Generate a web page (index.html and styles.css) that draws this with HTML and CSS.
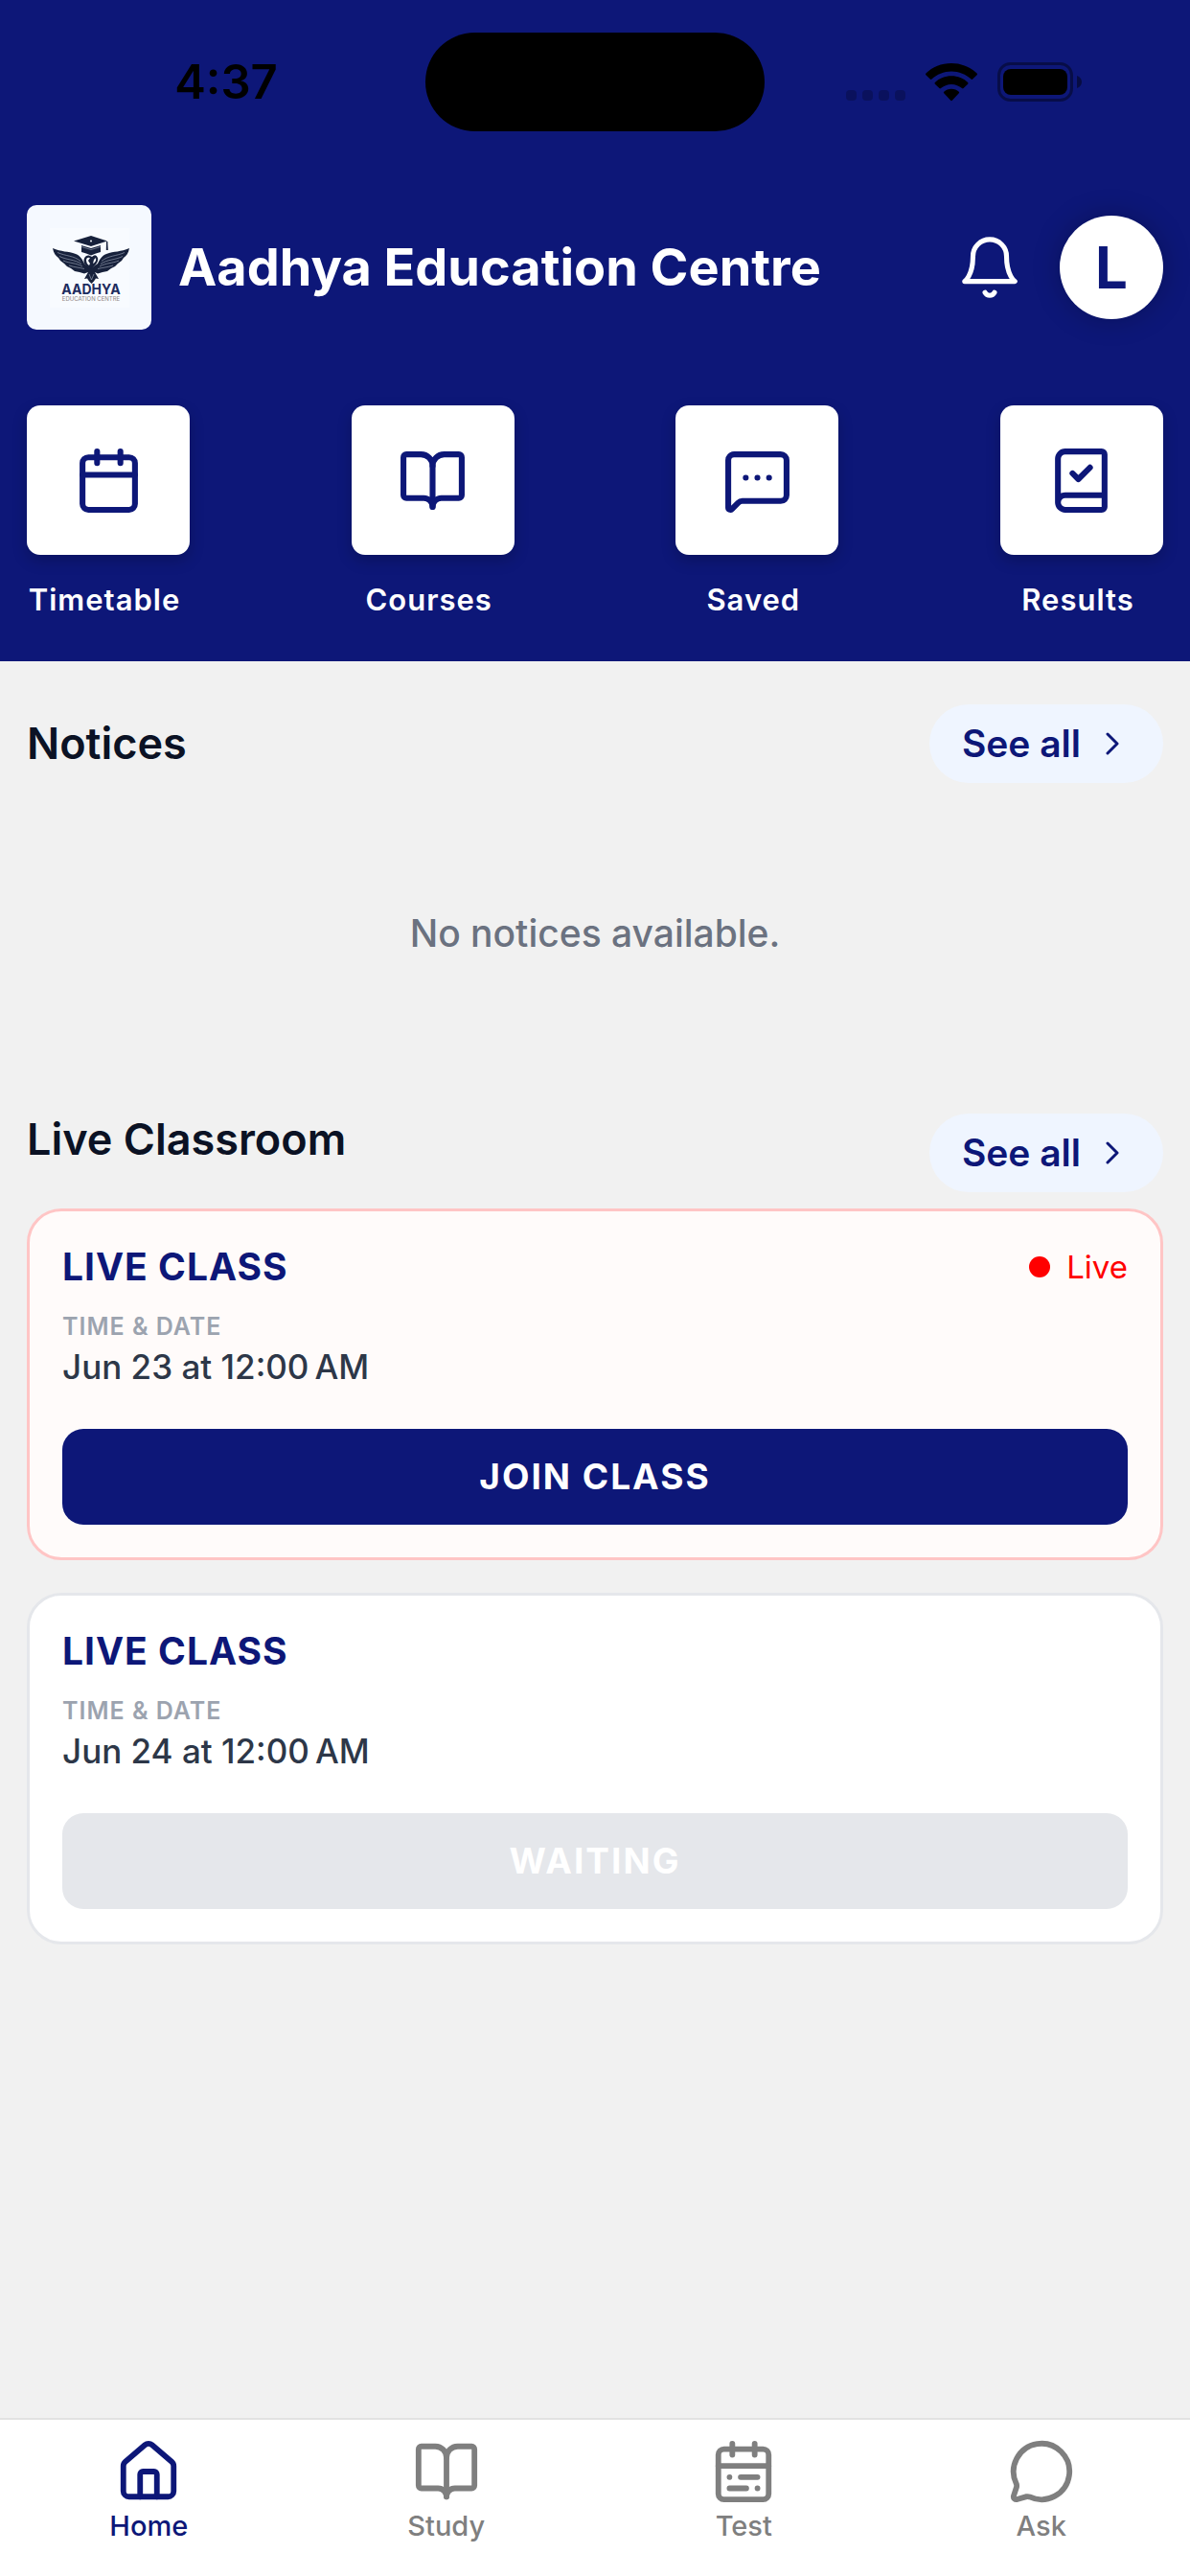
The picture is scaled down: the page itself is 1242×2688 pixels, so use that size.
FILE: index.html
```html
<!DOCTYPE html>
<html lang="en">
<head>
<meta charset="utf-8">
<meta name="viewport" content="width=device-width, initial-scale=1">
<title>Aadhya Education Centre</title>
<link rel="stylesheet" href="styles.css">
</head>
<body>
<header class="header">
  <div class="status">
    <div class="status-time">4:37</div>
    <div class="island"></div>
    <div class="status-icons">
      <svg class="signal" viewBox="0 0 62 41" aria-hidden="true"><g fill="#000" opacity=".22"><rect y="29" width="11" height="11" rx="4"/><rect x="17" y="29" width="11" height="11" rx="4"/><rect x="34" y="29" width="11" height="11" rx="4"/><rect x="51" y="29" width="11" height="11" rx="4"/></g></svg>
      <svg class="wifi" viewBox="0 0 54 41" aria-hidden="true"><path d="M27 1C16.600 1 7.200 5 .4 11.500q-.7.900 0 1.700l4.400 4.400q.8.700 1.700 0C11.900 12.600 19.100 9.500 27 9.500s15.100 3.100 20.500 8.100q.9.700 1.700 0l4.400-4.400q.7-.8 0-1.700C46.800 5 37.400 1 27 1zM27 14.300c-6.600 0-12.600 2.500-17.100 6.600q-.8.900 0 1.800l4.500 4.400q.8.700 1.600 0c2.900-2.600 6.800-4.200 11-4.200s8.100 1.600 11 4.200q.8.700 1.600 0l4.500-4.400q.8-.9 0-1.800c-4.500-4.100-10.500-6.600-17.100-6.600zM27 27.800c-3 0-5.700 1.100-7.800 2.900q-.7.800 0 1.600l7 7.500q.8.700 1.600 0l7-7.500q.7-.8 0-1.600c-2.100-1.800-4.800-2.900-7.800-2.900z"/></svg>
      <svg class="battery" viewBox="0 0 88 41" aria-hidden="true"><rect x="1.500" y="1.500" width="76" height="38" rx="12" fill="none" stroke="#000" stroke-width="3" opacity=".4"/><rect x="6" y="7" width="67" height="27" rx="8"/><path d="M83 14c3 .8 5 3.400 5 6.500s-2 5.700-5 6.500z" opacity=".45"/></svg>
    </div>
  </div>

  <div class="brand">
    <svg class="logo" viewBox="0 0 130 130" role="img" aria-label="Aadhya Education Centre logo">
      <rect width="130" height="130" fill="#f5f9ff"/>
      <rect x="24" y="24" width="83" height="83" fill="#f8fbff"/>
      <g fill="#17213b">
        <path d="M67 32 49 37.500 67 43 84 37.500z"/>
        <path d="M57 42l10 3L77 42v7q-5 1-10 3.500-5-2.500-10-3.500z"/>
        <path d="M83 38h1.300l.5 9h-2z"/>
        <path d="M27 45C36 49 43 48 51 51C56 53 58 57 60 61L67 66L74 61C76 57 78 53 83 51C91 48 98 49 107 45C106 50 104 53 101 55L99 58L95 61L92 64L88 66L84 69L79 70L74 71.500L71 70L75 77L72 76.500L70 79.500L67.500 82L65 79.500L63 76.500L60 77L64 70L60 71.500L55 70L50 69L46 66L42 64L39 61L35 58L33 55C30 53 28 50 27 45z"/>
        <path d="M60 61C58 54 63 50 68 54Q72 50 74 55Q75 58 72 62L67 67z"/>
      </g>
      <path d="M62 58q0-4 4-3l-2 3 2 3-1 2q-3-2-3-5zM72 55q1 4-3 6l1-4z" fill="#f8fbff"/>
      <path d="M32 49.500c9 4 17 3 24 9M34 53.500c8 4 16 3 23 8M38 58c7 3 13 2 20 6M44 63c6 2 10 2 16 3.500M102 49.500c-9 4-17 3-24 9M100 53.500c-8 4-16 3-23 8M96 58c-7 3-13 2-20 6M90 63c-6 2-10 2-16 3.500M57 43.500l10 3 10-3M65 72l2.500 6 2.500-6" fill="none" stroke="#a4adbd" stroke-width=".6"/>
      <circle cx="67" cy="37.500" r="1" fill="#f8fbff"/>
      <text class="logo-name" x="67" y="93" text-anchor="middle">AADHYA</text>
      <text class="logo-sub" x="67" y="100" text-anchor="middle">EDUCATION CENTRE</text>
    </svg>
    <h1 class="brand-title">Aadhya Education Centre</h1>
    <button class="bell" type="button" aria-label="Notifications">
      <svg class="icon icon-thin" viewBox="0 0 24 24"><path d="M6 8a6 6 0 0 1 12 0c0 7 3 9 3 9H3s3-2 3-9"/><path d="M10.300 21a1.940 1.940 0 0 0 3.400 0"/></svg>
    </button>
    <button class="avatar" type="button" aria-label="Profile">L</button>
  </div>

  <nav class="shortcuts" aria-label="Shortcuts">
    <a class="shortcut" href="#timetable">
      <span class="tile"><svg class="icon" viewBox="0 0 24 24"><path d="M8 2v4M16 2v4M3 10h18"/><rect width="18" height="18" x="3" y="4" rx="2"/></svg></span>
      <span class="shortcut-label">Timetable</span>
    </a>
    <a class="shortcut" href="#courses">
      <span class="tile"><svg class="icon" viewBox="0 0 24 24"><path d="M12 7v14"/><path d="M3 18a1 1 0 0 1-1-1V4a1 1 0 0 1 1-1h5a4 4 0 0 1 4 4 4 4 0 0 1 4-4h5a1 1 0 0 1 1 1v13a1 1 0 0 1-1 1h-6a3 3 0 0 0-3 3 3 3 0 0 0-3-3z"/></svg></span>
      <span class="shortcut-label">Courses</span>
    </a>
    <a class="shortcut" href="#saved">
      <span class="tile"><svg class="icon" viewBox="0 0 24 24"><path d="M22 17a2 2 0 0 1-2 2H6.828a2 2 0 0 0-1.414.586l-2.202 2.202A.71.71 0 0 1 2 21.286V5a2 2 0 0 1 2-2h16a2 2 0 0 1 2 2z"/><path d="M12 11h.01M16 11h.01M8 11h.01"/></svg></span>
      <span class="shortcut-label">Saved</span>
    </a>
    <a class="shortcut" href="#results">
      <span class="tile"><svg class="icon" viewBox="0 0 24 24"><path d="M4 19.500v-15A2.500 2.500 0 0 1 6.500 2H19a1 1 0 0 1 1 1v18a1 1 0 0 1-1 1H6.500a1 1 0 0 1 0-5H20"/><path d="m9 9.500 2 2 4-4"/></svg></span>
      <span class="shortcut-label">Results</span>
    </a>
  </nav>
</header>

<main class="main">
  <section>
    <div class="section-head section-head-center">
      <h2 class="section-title">Notices</h2>
      <a class="see-all" href="#notices">See all <svg class="chevron" viewBox="0 0 14 24" aria-hidden="true"><path d="M2 2l10 10L2 22"/></svg></a>
    </div>
    <p class="empty">No notices available.</p>
  </section>

  <section>
    <div class="section-head">
      <h2 class="section-title">Live Classroom</h2>
      <a class="see-all" href="#live">See all <svg class="chevron" viewBox="0 0 14 24" aria-hidden="true"><path d="M2 2l10 10L2 22"/></svg></a>
    </div>
    <div class="cards">
      <article class="card card-live">
        <div class="card-head">
          <h3 class="card-title">LIVE CLASS</h3>
          <span class="live">Live</span>
        </div>
        <div class="card-label">TIME &amp; DATE</div>
        <div class="card-date">Jun 23 at 12:00&#8239;AM</div>
        <button class="card-button" type="button">JOIN CLASS</button>
      </article>
      <article class="card">
        <div class="card-head">
          <h3 class="card-title">LIVE CLASS</h3>
        </div>
        <div class="card-label">TIME &amp; DATE</div>
        <div class="card-date">Jun 24 at 12:00&#8239;AM</div>
        <button class="card-button" type="button" disabled>WAITING</button>
      </article>
    </div>
  </section>
</main>

<nav class="tabs" aria-label="Main">
  <a class="tab tab-active" href="#home" aria-current="page">
    <svg class="icon" viewBox="0 0 24 24"><path d="M15 21v-8a1 1 0 0 0-1-1h-4a1 1 0 0 0-1 1v8"/><path d="M3 10a2 2 0 0 1 .709-1.528l7-5.999a2 2 0 0 1 2.582 0l7 5.999A2 2 0 0 1 21 10v9a2 2 0 0 1-2 2H5a2 2 0 0 1-2-2z"/></svg>
    Home
  </a>
  <a class="tab" href="#study">
    <svg class="icon" viewBox="0 0 24 24"><path d="M12 7v14"/><path d="M3 18a1 1 0 0 1-1-1V4a1 1 0 0 1 1-1h5a4 4 0 0 1 4 4 4 4 0 0 1 4-4h5a1 1 0 0 1 1 1v13a1 1 0 0 1-1 1h-6a3 3 0 0 0-3 3 3 3 0 0 0-3-3z"/></svg>
    Study
  </a>
  <a class="tab" href="#test">
    <svg class="icon" viewBox="0 0 24 24"><rect width="18" height="18" x="3" y="4" rx="2"/><path d="M16 2v4M3 10h18M8 2v4M17 14h-6M13 18H7M7 14h.01M17 18h.01"/></svg>
    Test
  </a>
  <a class="tab" href="#ask">
    <svg class="icon" viewBox="0 0 24 24"><path d="M2.992 16.342a2 2 0 0 1 .094 1.167l-1.065 3.290a1 1 0 0 0 1.236 1.168l3.413-.998a2 2 0 0 1 1.099.092 10 10 0 1 0-4.777-4.719"/></svg>
    Ask
  </a>
</nav>
</body>
</html>
```
FILE: styles.css
```css
:root {
  --navy: #0d1778;
  --ink: #0b1224;
}

* {
  box-sizing: border-box;
}

body {
  margin: 0;
  min-height: 100vh;
  display: flex;
  flex-direction: column;
  background: #f1f1f1;
  color: var(--ink);
  font-family: Inter, "Liberation Sans", sans-serif;
}

h1,
h2,
h3,
p {
  margin: 0;
}

a {
  color: inherit;
  text-decoration: none;
}

button {
  padding: 0;
  border: 0;
  font-family: inherit;
}

.icon {
  display: block;
  width: 70px;
  height: 70px;
  fill: none;
  stroke: currentColor;
  stroke-width: 2;
  stroke-linecap: round;
  stroke-linejoin: round;
}

.icon-thin {
  stroke-width: 1.75;
}

/* Header */
.header {
  padding: 34px 28px 44px;
  background: var(--navy);
  color: #fff;
}

.status {
  display: grid;
  grid-template-columns: 1fr 354px 1fr;
  align-items: center;
  color: #000;
}

.status-time {
  text-align: center;
  font-size: 49px;
  line-height: 60px;
  font-weight: 600;
}

.island {
  height: 103px;
  border-radius: 52px;
  background: #000;
}

.status-icons {
  display: flex;
  justify-content: center;
  gap: 21px;
}

.status-icons svg {
  height: 41px;
}

.signal {
  width: 62px;
}

.wifi {
  width: 54px;
}

.battery {
  width: 88px;
}

.brand {
  display: flex;
  align-items: center;
  margin-top: 77px;
}

.logo {
  flex: none;
  width: 130px;
  height: 130px;
  border-radius: 10px;
}

.logo-name {
  fill: #1d2c5e;
  font-size: 14px;
  font-weight: 700;
}

.logo-sub {
  fill: #8f8583;
  font-size: 6px;
}

.brand-title {
  flex: 1;
  margin-left: 28px;
  font-size: 54px;
  line-height: 68px;
  font-weight: 700;
}

.bell {
  background: none;
  color: #fff;
}

.avatar {
  width: 108px;
  height: 108px;
  margin-left: 38px;
  border-radius: 50%;
  background: #fff;
  box-shadow: 0 0 28px rgba(0, 0, 0, 0.25);
  color: var(--navy);
  font-size: 60px;
  font-weight: 700;
}

.shortcuts {
  display: flex;
  justify-content: space-between;
  margin-top: 79px;
}

.shortcut {
  display: flex;
  flex-direction: column;
  align-items: center;
  gap: 27px;
  width: 170px;
}

.tile {
  display: grid;
  place-items: center;
  width: 170px;
  height: 156px;
  border-radius: 14px;
  background: #fff;
  box-shadow: 0 6px 16px rgba(0, 0, 0, 0.2);
  color: var(--navy);
}

.tile .icon {
  width: 73px;
  height: 73px;
}

.shortcut-label {
  padding-right: 8px;
  font-size: 31px;
  line-height: 40px;
  font-weight: 600;
  letter-spacing: 1px;
}

/* Content */
.main {
  flex: 1;
  padding: 45px 28px;
}

.section-head {
  display: flex;
  justify-content: space-between;
  align-items: flex-start;
}

.section-head-center {
  align-items: center;
}

.section-title {
  font-size: 45px;
  line-height: 54px;
  font-weight: 600;
}

.see-all {
  display: flex;
  align-items: center;
  gap: 26px;
  padding: 17px 46px 17px 34px;
  border-radius: 41px;
  background: #eff5ff;
  color: var(--navy);
  font-size: 39px;
  line-height: 48px;
  font-weight: 600;
}

.chevron {
  width: 14px;
  height: 24px;
  fill: none;
  stroke: currentColor;
  stroke-width: 3;
  stroke-linecap: round;
  stroke-linejoin: round;
}

.empty {
  padding: 133px 0 164px;
  text-align: center;
  color: #6b7280;
  font-size: 39px;
  line-height: 48px;
  font-weight: 500;
}

.cards {
  display: flex;
  flex-direction: column;
  gap: 34px;
  margin-top: 17px;
}

.card {
  padding: 34px;
  border: 3px solid #e5e7eb;
  border-radius: 36px;
  background: #fff;
}

.card-live {
  border-color: #ffc5c5;
  background: #fffbfa;
}

.card-head {
  display: flex;
  justify-content: space-between;
  align-items: center;
}

.card-title {
  color: var(--navy);
  font-size: 39px;
  line-height: 48px;
  font-weight: 700;
  letter-spacing: 1px;
}

.live {
  display: flex;
  align-items: center;
  gap: 17px;
  color: #f00;
  font-size: 33px;
  line-height: 44px;
}

.live::before {
  content: "";
  width: 22px;
  height: 22px;
  border-radius: 50%;
  background: #f00;
}

.card-label {
  margin-top: 22px;
  color: #9ca3af;
  font-size: 25px;
  line-height: 32px;
  font-weight: 600;
  letter-spacing: 1px;
}

.card-date {
  margin-top: 4px;
  color: #2d3748;
  font-size: 35px;
  line-height: 44px;
  font-weight: 500;
}

.card-button {
  display: block;
  width: 100%;
  margin-top: 43px;
  padding: 26px;
  border-radius: 22px;
  background: var(--navy);
  color: #fff;
  font-size: 37px;
  line-height: 48px;
  font-weight: 700;
  letter-spacing: 2px;
}

.card-button:disabled {
  background: #e5e7eb;
  color: #fff;
}

/* Bottom tabs */
.tabs {
  display: grid;
  grid-template-columns: repeat(4, 1fr);
  padding: 19px 0 34px;
  border-top: 2px solid #e2e2e2;
  background: #fff;
}

.tab {
  display: flex;
  flex-direction: column;
  align-items: center;
  gap: 4px;
  color: #7f7f7f;
  font-size: 29px;
  line-height: 36px;
  font-weight: 500;
}

.tab-active {
  color: var(--navy);
}
```
